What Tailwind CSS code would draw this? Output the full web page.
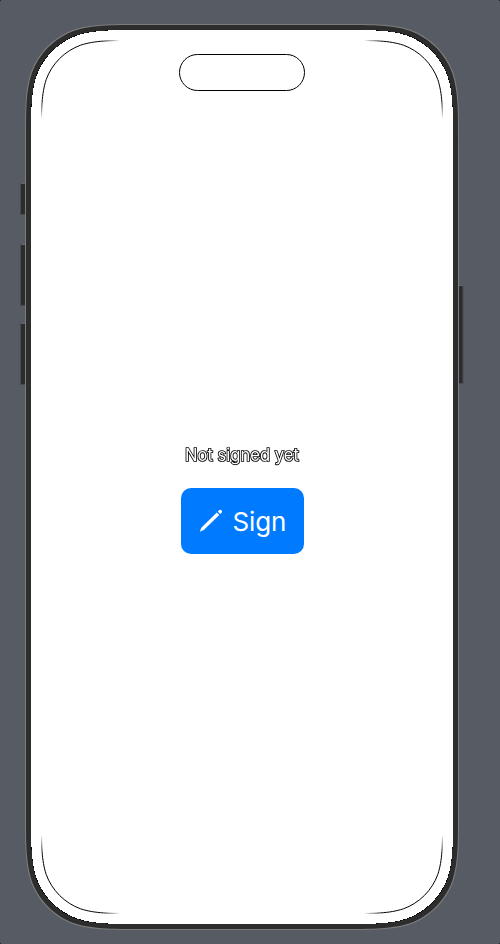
<!DOCTYPE html>
<html lang="en">
<head>
<meta charset="utf-8">
<title>Sign</title>
<script src="https://cdn.jsdelivr.net/npm/@tailwindcss/browser@4"></script>
</head>
<body class="bg-[#575b64] overflow-hidden">
<main class="relative w-[500px] h-[944px] font-['Inter','Liberation_Sans',sans-serif]">
  <svg class="absolute inset-0" width="500" height="944" viewBox="0 0 500 944" fill="none" aria-hidden="true">
    <defs>
      <radialGradient id="tl" gradientUnits="userSpaceOnUse" cx="41" cy="40" r="79"><stop offset=".76"/><stop offset="1" stop-opacity="0"/></radialGradient>
      <radialGradient id="tr" gradientUnits="userSpaceOnUse" cx="443" cy="40" r="79"><stop offset=".76"/><stop offset="1" stop-opacity="0"/></radialGradient>
      <radialGradient id="bl" gradientUnits="userSpaceOnUse" cx="41" cy="914" r="79"><stop offset=".76"/><stop offset="1" stop-opacity="0"/></radialGradient>
      <radialGradient id="br" gradientUnits="userSpaceOnUse" cx="443" cy="914" r="79"><stop offset=".76"/><stop offset="1" stop-opacity="0"/></radialGradient>
    </defs>
    <path d="M0 0h1v1H0zM499 0h1v1h-1zM0 943h1v1H0zM499 943h1v1h-1z" fill="#25272b"/>
    <g fill="#2c2c2c" stroke="#484b50" stroke-width="1">
      <path d="M20.5 183.5h6v31h-6zM20.5 244.5h6v61h-6zM20.5 323.5h6v61h-6zM457.5 285.5h5.500v98h-5.500z"/>
    </g>
    <path d="M21 183.500h4M21 244.500h4M21 323.500h4M459 285.500h4" stroke="#666867"/>
    <path data-box="25,24,434,906,77" fill="#7b7c7c"/>
    <path data-box="26,25,432,904,76.500" fill="#2d2d2d"/>
    <path data-box="31,30,422,894,71" fill="#050505" shape-rendering="crispEdges"/>
    <path data-box="31,30,422,894,73" fill="#fff" shape-rendering="crispEdges"/>
    <path data-box="41.5,40.5,401,873,62" stroke="url(#tl)"/>
    <path data-box="41.5,40.5,401,873,62" stroke="url(#tr)"/>
    <path data-box="41.5,40.5,401,873,62" stroke="url(#bl)"/>
    <path data-box="41.5,40.5,401,873,62" stroke="url(#br)"/>
    <rect x="179.500" y="54.500" width="125" height="36" rx="18" stroke="#000"/>
  </svg>
  <section class="relative flex flex-col items-center w-[484px] pt-[445px]">
    <p class="text-[16.6px] leading-[20px] whitespace-nowrap text-white [-webkit-text-stroke:1.7px_#000] [paint-order:stroke_fill] will-change-transform" id="status">Not signed yet</p>
    <button class="mt-[23px] flex items-center w-[123px] h-[66px] rounded-[10px] bg-[#007bff] pl-[18px] text-white">
      <svg width="26" height="26" viewBox="0 0 26 26" fill="#fff" aria-hidden="true">
        <path d="M.8 23.800 2.300 19.800 17.800 4.500 20.300 6.900 4.800 22.100Z"/>
        <path d="M18.800 3.600 20.400 2.100Q21.500 1.300 22.500 2.300T22.700 4.500L21.200 6Z"/>
      </svg>
      <span class="ml-[8px] pt-[2px] text-[26px] leading-[32px] tracking-[-0.1px]">Sign</span>
    </button>
  </section>
</main>
<script>
  // Rounded rectangle with continuous-curvature corners.
  function roundedPath(x, y, w, h, r) {
    const a = 1.52866 * r, b = 1.08849 * r, c = 0.86841 * r, d = 0.63149 * r;
    const e = 0.07491 * r, f = 0.37282 * r, g = 0.16906 * r, R = x + w, B = y + h;
    return `M${x + a} ${y}L${R - a} ${y}C${R - b} ${y} ${R - c} ${y} ${R - d} ${y + e}C${R - f} ${y + g} ${R - g} ${y + f} ${R - e} ${y + d}C${R} ${y + c} ${R} ${y + b} ${R} ${y + a}` +
      `L${R} ${B - a}C${R} ${B - b} ${R} ${B - c} ${R - e} ${B - d}C${R - g} ${B - f} ${R - f} ${B - g} ${R - d} ${B - e}C${R - c} ${B} ${R - b} ${B} ${R - a} ${B}` +
      `L${x + a} ${B}C${x + b} ${B} ${x + c} ${B} ${x + d} ${B - e}C${x + f} ${B - g} ${x + g} ${B - f} ${x + e} ${B - d}C${x} ${B - c} ${x} ${B - b} ${x} ${B - a}` +
      `L${x} ${y + a}C${x} ${y + b} ${x} ${y + c} ${x + e} ${y + d}C${x + g} ${y + f} ${x + f} ${y + g} ${x + d} ${y + e}C${x + c} ${y} ${x + b} ${y} ${x + a} ${y}Z`;
  }
  document.querySelectorAll('[data-box]').forEach(p => p.setAttribute('d', roundedPath(...p.dataset.box.split(',').map(Number))));
</script>
</body>
</html>
